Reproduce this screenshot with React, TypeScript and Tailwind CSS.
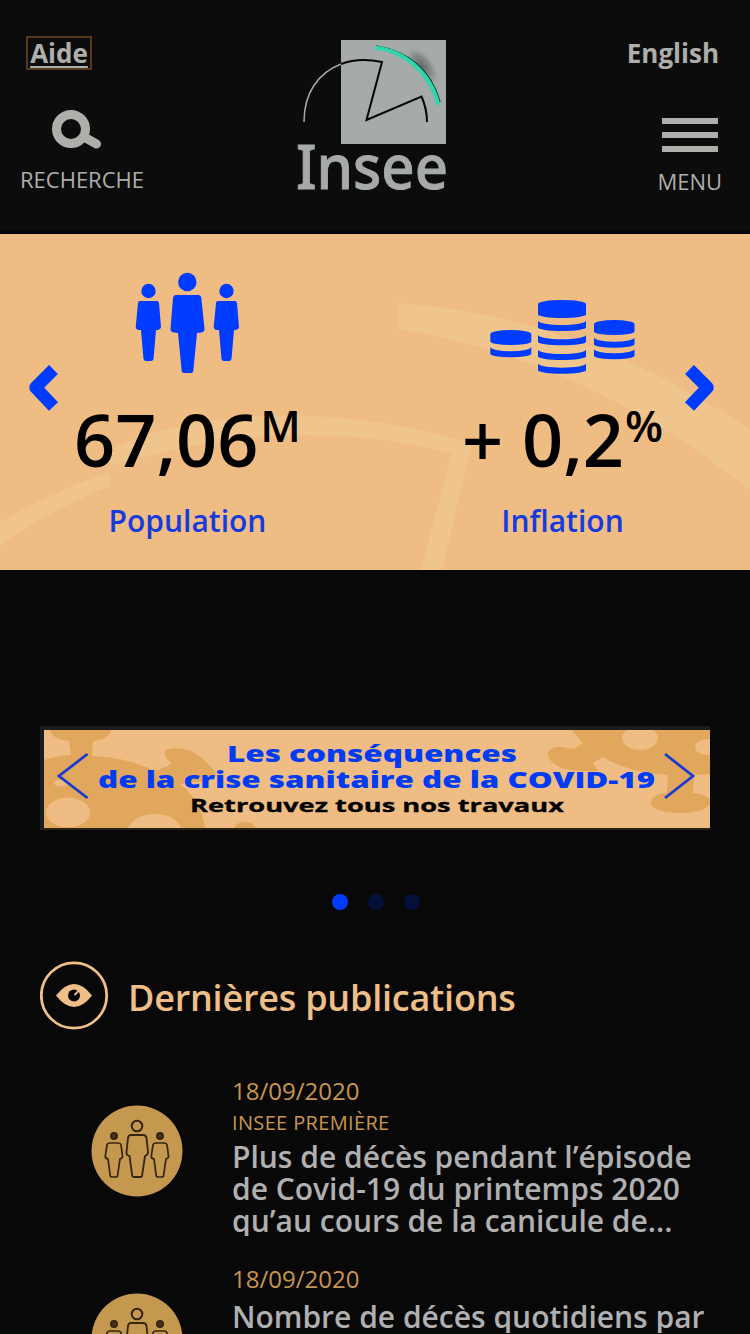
import clsx from 'clsx';

interface Publication {
  date: string;
  collection?: string;
  title: string[];
}

const publications: Publication[] = [
  {
    date: '18/09/2020',
    collection: 'INSEE PREMIÈRE',
    title: ['Plus de décès pendant l’épisode', 'de Covid-19 du printemps 2020', 'qu’au cours de la canicule de...'],
  },
  {
    date: '18/09/2020',
    title: ['Nombre de décès quotidiens par'],
  },
];

function Logo() {
  return (
    <svg width="160" height="164" viewBox="292 36 160 164" role="img" aria-label="Insee">
      <defs>
        <radialGradient id="logo-shadow">
          <stop offset="0" stopColor="#646767" />
          <stop offset="0.5" stopColor="#7d8181" stopOpacity="0.8" />
          <stop offset="1" stopColor="#a6abaa" stopOpacity="0" />
        </radialGradient>
        <clipPath id="logo-shadow-clip">
          <path d="M376 46C408 51 431 70 440 102H446V40H376Z" />
        </clipPath>
      </defs>
      <path d="M341 40h105v104H341z" fill="#a6abaa" />
      <g clipPath="url(#logo-shadow-clip)">
        <ellipse cx="422" cy="66" rx="25" ry="13" transform="rotate(52 422 66)" fill="url(#logo-shadow)" />
      </g>
      <path d="M304 122C304 93 318 73 341 64" fill="none" stroke="#a6abaa" strokeWidth="1.5" />
      <path d="M341 64Q359 57 382 62L366.500 120 421.500 96.500Q427 109 427 122" fill="none" stroke="#050505" strokeWidth="2" />
      <path d="M376 46C408 51 431 70 440 102" fill="none" stroke="#083b32" strokeWidth="1.500" />
      <path d="M375 47.500C406 51 431 74 438.500 105" fill="none" stroke="#31d5ac" strokeWidth="4" />
      <text
        x="296"
        y="189"
        textLength="152"
        lengthAdjust="spacingAndGlyphs"
        className="font-['Noto_Sans',sans-serif] text-[62px] font-medium"
        fill="#a6abaa"
        stroke="#a6abaa"
        strokeWidth="0.9"
      >
        Insee
      </text>
    </svg>
  );
}

function Header() {
  return (
    <header className="flex h-[234px] justify-between border-b-4 border-[#080407] bg-[#0c0c0c] text-[#aeaeaa]">
      <div className="flex w-[165px] flex-col items-start">
        <a className="mt-9 ml-[26px] flex h-[34px] w-[66px] justify-center border-2 border-[#57391c] text-[26px] leading-[30px] font-bold underline decoration-2 underline-offset-[3px]">
          Aide
        </a>
        <button className="mt-[38px] ml-5 flex w-[124px] flex-col items-center">
          <svg width="54" height="42" viewBox="50 107 54 42" className="-translate-x-[5px]">
            <circle cx="71" cy="128" r="14.500" fill="none" stroke="#aeaeaa" strokeWidth="9" />
            <path d="M85 136.500L96.500 143" stroke="#aeaeaa" strokeWidth="9" strokeLinecap="round" />
          </svg>
          <span className="mt-3.5 text-[22px] leading-[30px]">RECHERCHE</span>
        </button>
      </div>
      <div className="mt-9 mr-1.5">
        <Logo />
      </div>
      <div className="flex w-[165px] flex-col items-end">
        <a className="mt-9 mr-[31px] text-[26px] leading-[34px] font-bold">English</a>
        <button className="mt-12 mr-7 flex flex-col items-center">
          <span className="flex w-14 flex-col gap-2">
            <span className="h-1.5 bg-[#aeaeaa]" />
            <span className="h-1.5 bg-[#aeaeaa]" />
            <span className="h-1.5 bg-[#aeaeaa]" />
          </span>
          <span className="mt-[14px] text-[22px] leading-[30px]">MENU</span>
        </button>
      </div>
    </header>
  );
}

function PeopleIcon() {
  return (
    <svg width="106" height="102" viewBox="135 272 106 102" fill="#003cff">
      {[0, 78].map((dx) => (
        <g key={dx} transform={`translate(${dx} 0)`}>
          <circle cx="148.500" cy="291" r="7.200" />
          <path d="M140 301H157Q158.500 301 159 303L161 327Q161 329 158 330H156L153.500 359Q153 361 151 361H146Q144 361 143.500 359L141 330H138Q135.700 329 135.700 327L138 303Q138 301 140 301Z" />
        </g>
      ))}
      <circle cx="187.300" cy="282" r="9.200" />
      <path d="M176 295H198.500Q201 295 201.300 298L204.500 329Q204.500 332 201 332.500L197 333 193.300 371Q193 373 191 373H184Q182 373 181.700 371L178 333 174 332.500Q170.300 332 170.500 329L173 298Q173.500 295 176 295Z" />
    </svg>
  );
}

interface CoinStackProps {
  x: number;
  y: number;
  width: number;
  thickness: number;
  bands: number[];
}

function CoinStack({ x, y, width, thickness, bands }: CoinStackProps) {
  const r = width / 2;
  return (
    <g>
      <path d={`M${x} ${y + 4}A${r} 4 0 0 1 ${x + width} ${y + 4}V${y + thickness - 3.5}A${r} 3.5 0 0 1 ${x} ${y + thickness - 3.5}Z`} />
      {bands.map((b) => (
        <path key={b} d={`M${x} ${b - 10.5}A${r} 4.5 0 0 0 ${x + width} ${b - 10.5}V${b - 3.5}A${r} 3.5 0 0 1 ${x} ${b - 3.5}Z`} />
      ))}
    </g>
  );
}

function CoinsIcon() {
  return (
    <svg width="146" height="76" viewBox="490 299 146 76" fill="#003cff">
      <CoinStack x={490.3} y={330} width={41} thickness={15} bands={[357.3]} />
      <CoinStack x={538} y={300} width={48} thickness={18} bands={[331, 345.3, 360, 373.7]} />
      <CoinStack x={594} y={320} width={40.500} thickness={15} bands={[347.7, 359.3]} />
    </svg>
  );
}

function HeroBackdrop() {
  return (
    <svg className="absolute inset-0" width="750" height="336" viewBox="0 234 750 336" fill="#f0c58d">
      <path d="M399 303Q585 317 750 430V490Q585 359 399 329Z" />
      <path d="M0 522Q48 494 110 472V486Q53 508 0 545Z" />
      <path d="M110 449C195 410 330 402 472 443L442 570H421L452 453C330 423 220 433 110 466Z" />
    </svg>
  );
}

function HeroArrow({ right }: { right?: boolean }) {
  return (
    <svg
      width="32"
      height="48"
      viewBox="28 364 32 48"
      className={clsx('absolute top-[130px]', right ? 'right-[35px] -scale-x-100' : 'left-7')}
    >
      <path d="M53.500 369.500L35.500 387.500 53.500 406.500" fill="none" stroke="#003cff" strokeWidth="12.500" strokeLinejoin="round" />
    </svg>
  );
}

function KeyFigures() {
  return (
    <section className="relative grid h-[336px] grid-cols-2 bg-[#efbc84]">
      <HeroBackdrop />
      <div className="relative flex flex-col items-center pt-[38px]">
        <PeopleIcon />
        <p className="mt-4 flex text-[72px] leading-[98px] font-semibold text-black">
          67,06<span className="ml-0.5 text-[44px] leading-[71px]">M</span>
        </p>
        <p className="mt-3 text-[30px] leading-[42px] font-semibold text-[#163bdc]">Population</p>
      </div>
      <div className="relative flex flex-col items-center pt-[65px]">
        <CoinsIcon />
        <p className="mt-[15px] flex text-[72px] leading-[98px] font-semibold text-black">
          + 0,2<span className="ml-px text-[44px] leading-[71px]">%</span>
        </p>
        <p className="mt-3 text-[30px] leading-[42px] font-semibold text-[#163bdc]">Inflation</p>
      </div>
      <HeroArrow />
      <HeroArrow right />
    </section>
  );
}

function CovidBanner() {
  return (
    <div className="mx-10 mt-[156px] h-[104px] border-t-4 border-b-2 border-l-4 border-t-[#1e1b1e] border-b-[#2b2016] border-l-[#191d20] bg-[#efbc84]">
      <svg width="666" height="98" viewBox="44 730 666 98" className="block font-extrabold">
        <g fill="#e1a75c">
          <path d="M50 730H111C110 736 103 740 93 741L92 756C116 757 136 762 155 771L168 766 172 763C164 758 162 750 169 749C188 745 205 757 216 774C214 783 196 781 180 784C194 795 203 811 205 828H44V760Q55 756 71 755L69 741C60 740 51 737 50 730Z" />
          <path d="M234 828Q236 822 245 822T256 828Z" />
          <path d="M572 730H710V774Q701 776 694 774L693 793C703 794 710 797 710 801C710 809 697 813 681 813C663 813 651 809 651 803C651 797 658 793 667 793L668 775C637 773 618 766 603 757L593 763 598 771H580C563 771 548 763 548 754C548 748 555 746 563 747L574 749 583 743Z" />
        </g>
        <g fill="#efbc84">
          <ellipse cx="68" cy="812.500" rx="22" ry="15" />
          <path d="M128 828Q135 814 155 814T181 828Z" />
          <ellipse cx="61" cy="783" rx="7" ry="3.500" />
          <ellipse cx="640" cy="738" rx="18" ry="12" />
          <ellipse cx="708" cy="747" rx="13" ry="8" />
        </g>
        <text x="227" y="762" textLength="290" lengthAdjust="spacingAndGlyphs" className="text-[22px]" fill="#003cf5">
          Les conséquences
        </text>
        <text x="98" y="788" textLength="557" lengthAdjust="spacingAndGlyphs" className="text-[22px]" fill="#003cf5">
          de la crise sanitaire de la COVID-19
        </text>
        <text x="190" y="812" textLength="374" lengthAdjust="spacingAndGlyphs" className="text-[18px] font-bold" fill="#000" stroke="#000" strokeWidth="0.3">
          Retrouvez tous nos travaux
        </text>
        <path d="M87.500 754L59 776 87.500 798M665 754L693 776 665 798" fill="none" stroke="#183bd2" strokeWidth="2.800" />
      </svg>
    </div>
  );
}

function PublicationIcon() {
  return (
    <svg width="92" height="92" viewBox="91 1105 92 92" className="shrink-0" fill="none" stroke="#35240f">
      <circle cx="137" cy="1151" r="45.500" fill="#c4984e" stroke="none" />
      <circle cx="137" cy="1126" r="5.300" strokeWidth="2" />
      <path
        d="M131 1135H143Q146 1135 146.500 1138L148 1152Q148 1155 145 1156L142 1176Q142 1177 140 1177H134.500Q132.500 1177 132.300 1176L129.500 1156Q126 1155 126.500 1152L128 1138Q128.500 1135 131 1135Z"
        strokeWidth="1.800"
      />
      {[0, 46].map((dx) => (
        <g key={dx} transform={`translate(${dx} 0)`}>
          <circle cx="114" cy="1136" r="3" fill="#4b3417" strokeWidth="2" />
          <path
            d="M110 1143H118Q120.500 1143 121 1145L122.500 1156Q122.500 1158.500 120 1159L117.500 1176Q117.300 1177 116 1177H112Q110.500 1177 110.300 1176L108 1159Q105 1158.500 105.300 1156L107 1145Q107.500 1143 110 1143Z"
            strokeWidth="1.700"
          />
        </g>
      ))}
    </svg>
  );
}

function PublicationItem({ date, collection, title }: Publication) {
  return (
    <li className="flex h-[188px] items-start pl-[91px]">
      <div className="mt-[30px]">
        <PublicationIcon />
      </div>
      <div className="ml-[49px] text-[#b0b0b0]">
        <p className="text-[24px] leading-[32px] text-[#c89550]">{date}</p>
        {collection && <p className="mt-px text-[20px] leading-[30px] tracking-[0.35px] text-[#c89550]">{collection}</p>}
        <div className={clsx('max-h-[95px] overflow-hidden text-[30px] leading-[32px] font-semibold', collection ? 'mt-[3px]' : 'mt-1.5')}>
          {title.map((line) => (
            <p key={line} className="whitespace-nowrap">
              {line}
            </p>
          ))}
        </div>
      </div>
    </li>
  );
}

export default function App() {
  return (
    <div className="h-[1334px] w-[750px] overflow-hidden bg-[#080808] font-['Open_Sans','Noto_Sans',sans-serif]">
      <Header />
      <main>
        <KeyFigures />
        <CovidBanner />
        {/* Carousel position */}
        <div className="mt-16 ml-[332px] flex gap-5">
          <span className="size-4 rounded-full bg-[#003cff]" />
          <span className="size-4 rounded-full bg-[#05103a]" />
          <span className="size-4 rounded-full bg-[#05103a]" />
        </div>
        <section>
          <h2 className="mt-[51px] ml-10 flex h-[69px] items-center gap-[19px] text-[36px] leading-[50px] font-semibold tracking-[-0.23px] text-[#efbf87]">
            <svg width="69" height="69" viewBox="40 961.500 69 69">
              <circle cx="74" cy="996" r="32.700" fill="none" stroke="#efbf87" strokeWidth="2.800" />
              <path d="M56 996Q65 984.500 74 984.500T92 996Q83 1007.500 74 1007.500T56 996Z" fill="#efbf87" />
              <circle cx="74" cy="996" r="6" fill="#080808" />
              <path d="M74.500 995.500L79 991" stroke="#efbf87" strokeWidth="1.800" />
            </svg>
            <span className="mt-1">Dernières publications</span>
          </h2>
          <ul className="mt-[45px]">
            {publications.map((publication) => (
              <PublicationItem key={publication.title[0]} {...publication} />
            ))}
          </ul>
        </section>
      </main>
    </div>
  );
}
